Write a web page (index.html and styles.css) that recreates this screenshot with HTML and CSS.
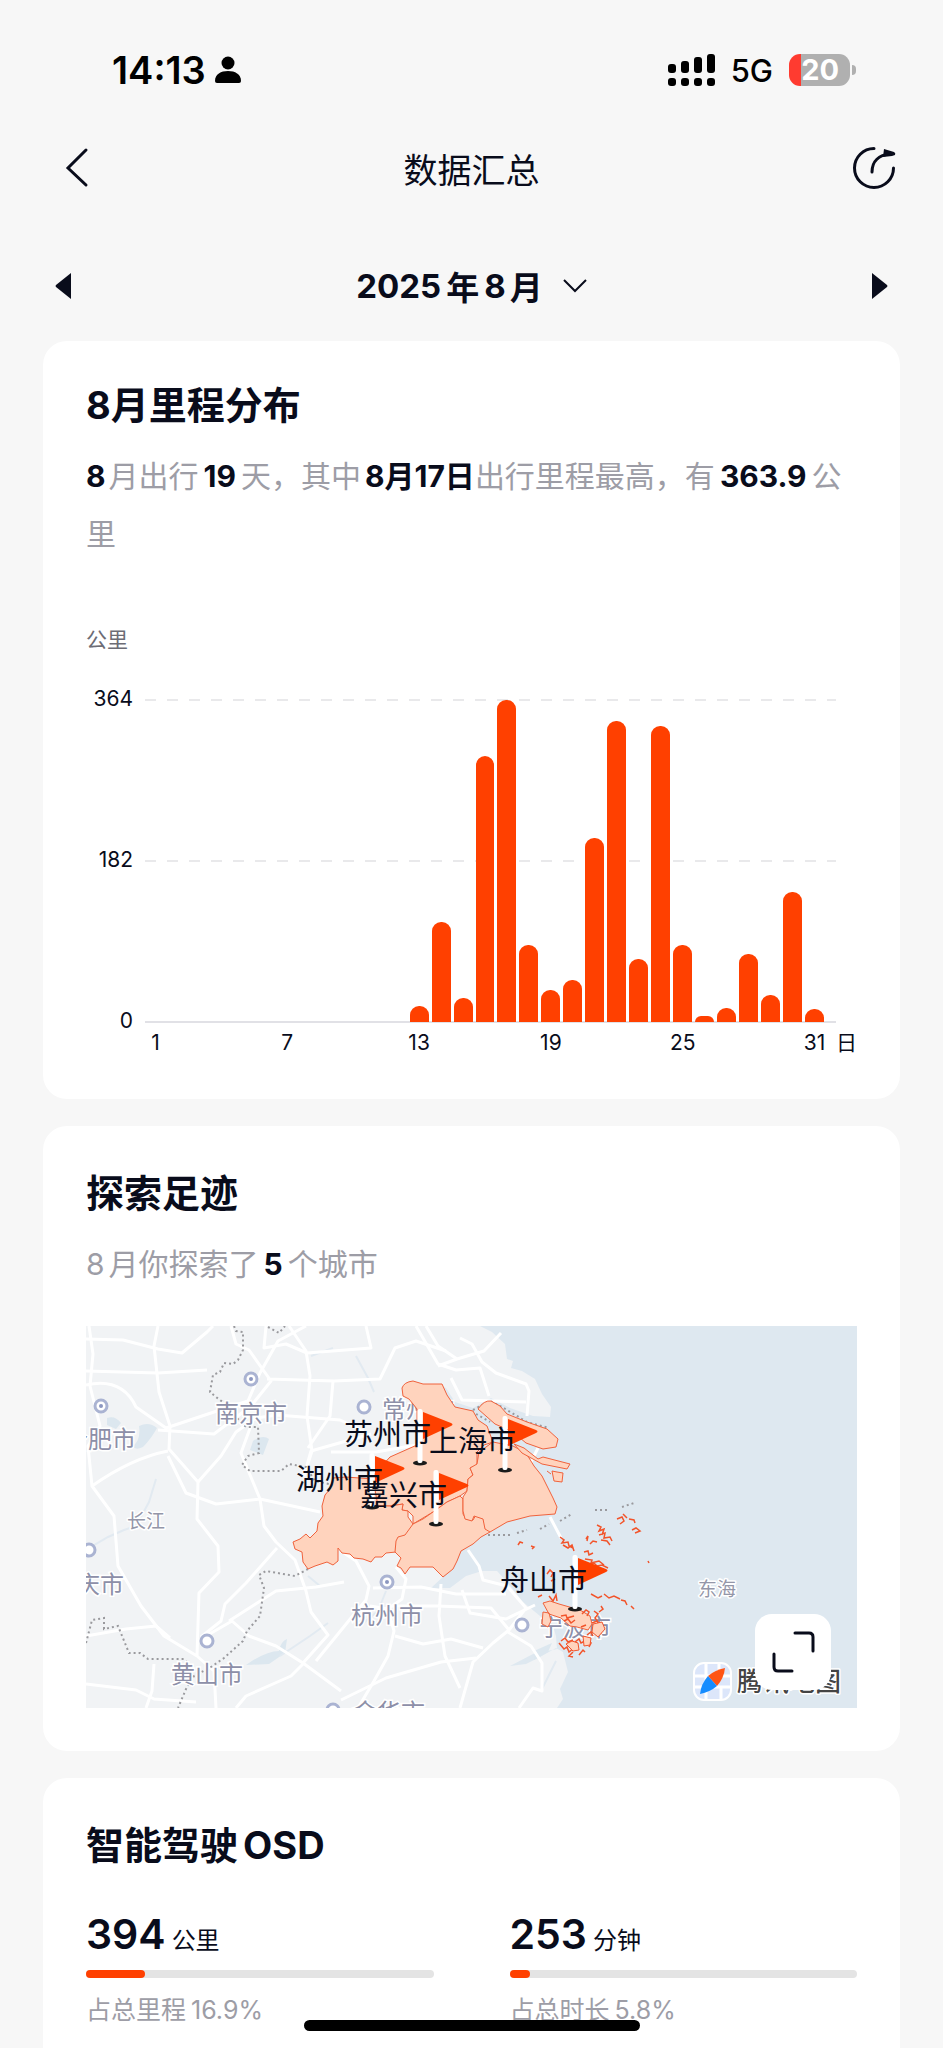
FILE: index.html
```html
<!DOCTYPE html>
<html lang="zh-CN">
<head>
  <meta charset="UTF-8">
  <meta name="viewport" content="width=device-width, initial-scale=1">
  <title>数据汇总</title>
  <link rel="stylesheet" href="styles.css">
</head>
<body>
  <!-- Phone status bar -->
  <div class="status-bar">
    <div class="status-left">
      <span class="time">14:13</span>
      <svg width="26" height="28" viewBox="0 0 26 28"><circle cx="13" cy="7" r="6.5"/><path d="M0 25C0 18 6 15 13 15s13 3 13 10q0 2-2 2H2q-2 0-2-2z"/></svg>
    </div>
    <div class="status-right">
      <svg width="47" height="32" viewBox="0 0 47 32">
        <rect x="0" y="10" width="8" height="9" rx="3"/><rect x="13" y="7" width="8" height="12" rx="3"/><rect x="26" y="3" width="8" height="16" rx="3"/><rect x="39" y="0" width="8" height="19" rx="3"/>
        <rect x="0" y="24" width="8" height="8" rx="3"/><rect x="13" y="24" width="8" height="8" rx="3"/><rect x="26" y="24" width="8" height="8" rx="3"/><rect x="39" y="24" width="8" height="8" rx="3"/>
      </svg>
      <span class="network">5G</span>
      <span class="battery"><span class="battery-level">20</span></span>
    </div>
  </div>

  <header class="nav-bar">
    <button class="icon-btn" aria-label="返回">
      <svg width="44" height="44" viewBox="0 0 44 44"><path d="M39 4 21 22l18 17" class="line"/></svg>
    </button>
    <h1>数据汇总</h1>
    <button class="icon-btn" aria-label="分享">
      <svg width="44" height="44" viewBox="0 0 44 44"><path d="M22 2.500A19.500 19.500 0 1 0 41.500 22M20 26C20 15 27 9 38 8" class="line"/><path d="M32 3 42 6q2 1 1 3l-3 1-9 1z" class="solid"/></svg>
    </button>
  </header>

  <div class="month-bar">
    <button class="icon-btn" aria-label="上个月"><svg width="16" height="26" viewBox="0 0 16 26"><path d="M16 0v26L1 14q-1-1 0-2z" class="solid"/></svg></button>
    <button class="month-btn">2025<span class="year">年</span>8<span class="month">月</span>
      <svg width="24" height="14" viewBox="0 0 24 14"><path d="M1 1l11 11L23 1" class="thin"/></svg>
    </button>
    <button class="icon-btn" aria-label="下个月"><svg width="16" height="26" viewBox="0 0 16 26"><path d="M0 0v26l15-12q1-1 0-2z" class="solid"/></svg></button>
  </div>

  <main>
    <!-- Daily mileage -->
    <section class="card mileage">
      <h2>8月里程分布</h2>
      <p class="summary"><strong class="first">8</strong>月出行<strong class="num">19</strong>天，其中<strong class="lead">8月17日</strong>出行里程最高，有<strong class="num">363.9</strong>公里</p>
      <div class="unit">公里</div>
      <div class="chart">
        <div class="y-axis"><span>364</span><span>182</span><span>0</span></div>
        <div class="plot">
          <svg class="grid-lines" width="100%" height="100%"><line x1="0" x2="100%" y1="0" y2="0"/><line x1="0" x2="100%" y1="50%" y2="50%"/><line x1="0" x2="100%" y1="100%" y2="100%" class="base"/></svg>
          <div class="bars">
            <i></i><i></i><i></i><i></i><i></i><i></i><i></i><i></i><i></i><i></i><i></i><i></i>
            <i style="height:5%"></i>
            <i style="height:31%"></i>
            <i style="height:7.5%"></i>
            <i style="height:82.5%"></i>
            <i style="height:100%"></i>
            <i style="height:24%"></i>
            <i style="height:10%"></i>
            <i style="height:13%"></i>
            <i style="height:57%"></i>
            <i style="height:93.5%"></i>
            <i style="height:19.5%"></i>
            <i style="height:92%"></i>
            <i style="height:24%"></i>
            <i style="height:2%"></i>
            <i style="height:4.5%"></i>
            <i style="height:21%"></i>
            <i style="height:8.5%"></i>
            <i style="height:40.5%"></i>
            <i style="height:4%"></i>
          </div>
        </div>
        <div class="x-axis"><span class="d1">1</span><span class="d7">7</span><span class="d13">13</span><span class="d19">19</span><span class="d25">25</span><span class="d31">31</span></div>
        <span class="x-unit">日</span>
      </div>
    </section>

    <!-- Visited cities -->
    <section class="card">
      <h2>探索足迹</h2>
      <p class="summary">8<span class="month">月</span>你探索了<strong class="num">5</strong>个城市</p>
      <div class="map">
        <svg class="map-canvas" viewBox="0 0 771 382">
          <defs>
            <g id="flag">
              <ellipse rx="7" ry="2.5" fill="#1b1b1b"/>
              <rect x="-2.5" y="-54" width="5" height="54" rx="2" fill="#fff"/>
              <path d="M3-51 31-40q3 1.500 0 3L3-24z" fill="#ff4000"/>
            </g>
            <g id="town"><circle r="6" fill="#fff" stroke="#aab3d2" stroke-width="3"/></g>
            <g id="capital"><use href="#town"/><circle r="2" fill="#8c97c0"/></g>
          </defs>
          <rect width="771" height="382" fill="#f1f3f5"/>
          <!-- sea -->
          <path fill="#dee8f0" d="M394 0 406 6 419 18 421 33 427 35 425 42 436 45 449 53 456 68 465 81 464 91 447 90 424 82 405 72 387 82 369 76 360 62 352 58 356 95 404 205 372 224 360 248 345 262 364 262 380 250 396 245 411 245 421 256 437 276 454 290 467 300 470 310 471 323 447 328 424 340 440 338 454 331 470 322 477 326 482 346 474 363 477 373 471 382H771V0z"/>
          <path class="lake" d="M21 92q8-3 14 5l-5 6-9-4zM53 100q10-5 18 2-6 11-14 19-8 4-10-1 8-6 6-20zM167 115q10-7 16-2l-6 16-13-5zM160 339q20-14 33-14 2-10 8-12l-2 14-16 11zM448 325l18-8-4 9-14 8z"/>
          <path class="river" d="M225 30l22-8M0 224 22 211 38 204 50 200 63 176 70 153M222 250l12 10M300 265l-8 20-18 15M455 365l15-30M194 330l30-20 18-13M270 30l12 22 6 14"/>
          <g class="roads">
            <path d="M0 13 37 14 72 23 96 27 121 6 127 0M0 45 72 47 121 44M72 0 68 20 73 66 84 100 83 123 98 140 112 156 111 193 132 220 133 246 113 267 111 330 128 345 130 382M3 0 7 28 4 60 14 100 2 120 6 160 28 190 32 240 55 280 78 310 111 330"/>
            <path d="M0 59q36-8 50 22l30 21 54-18 28-9 12-28 18-32 28-15M181 53 248 55 294 53 309 22 330 15 360 25M203 0 220 25 224 50 221 90 226 125 218 150M247 55 244 90 222 122M72 104 128 108 165 80 185 55 163 24 150 18 145 0"/>
            <path d="M6 160q40-28 76-35M112 156 135 130 150 106 170 92 191 89 254 94 278 105M82 130 100 167 130 178 174 173 211 181 234 186M174 173 178 200 190 216 209 234 220 265 225 286 242 309 217 337 255 365M174 173 155 127 167 94M191 222 160 257 139 278 135 295 115 311M120 310 146 295 163 310 190 320 217 337M143 295 190 265 230 261 258 256"/>
            <path d="M230 335 265 292 280 274 283 260 270 235 255 225M287 262 335 261 370 268 420 268M355 258 353 290 359 330 374 362M284 280 302 283 316 273 320 253 310 241M302 283 308 305 302 330 288 355 272 382M309 310 337 318 365 313 397 322M302 280 351 280 405 282 423 304"/>
            <path d="M0 358 50 364 68 373 110 376M0 310 40 303 70 300 84 312M68 338 66 365 60 382M218 337 205 350 160 370 150 382M255 374 300 352 355 336 390 332M180 0 178 22 200 18 221 27 285 22 280 0M330 0 352 38 370 44 394 42 403 70"/>
            <path d="M352 40 371 33 398 25 415 7M374 12 386 18 396 36 410 47 440 58 443 65 441 90M365 52 376 74 440 76M371 33 352 20 340 0M382 224 393 240 397 254 421 260 440 282 423 304 407 317 387 336 374 382M376 264 384 287 420 293 449 279M422 306 445 320 456 337 456 365 447 362 433 382M464 191 475 212M353 110 395 101M452 122 444 138M245 126 290 126 330 119M218 150 225 125 285 108"/>
          </g>
          <path class="border" d="M148 0 150 5 157 6 157 24 152 34 147 38 138 37 134 46 127 49 124 66 130 71 138 77 149 90 160 101 172 101 173 127 162 130 156 139 164 145 195 145 203 138 220 141 229 155 243 158M222 243 209 250 180 245 173 249 178 262 174 290 161 305 157 315 138 332 125 341 108 350 100 363 92 382M0 317 6 294 18 292 18 303 32 300 43 327 54 327 62 333 98 333 104 341M182 1 193 7 199 0M390 88 404 96M387 84 404 75 416 81 441 96 463 102M402 209H424M431 207l10-3M454 203 463 198M474 195 486 188M509 184h12M536 181 548 177"/>

          <g class="city">
            <text x="129" y="96">南京市</text><text x="-22" y="122">合肥市</text><text x="296" y="92">常州市</text>
            <text x="-34" y="267">安庆市</text><text x="85" y="357">黄山市</text><text x="265" y="298">杭州市</text>
            <text x="267" y="395">金华市</text><text x="453" y="310">宁波市</text>
            <text x="41" y="202" class="water">长江</text><text x="612" y="270" class="water">东海</text>
          </g>
          <use href="#capital" x="165" y="53"/><use href="#capital" x="15" y="80"/><use href="#capital" x="301" y="256"/>
          <use href="#town" x="278" y="81"/><use href="#town" x="3" y="224"/><use href="#town" x="121" y="315"/><use href="#town" x="247" y="384"/><use href="#town" x="436" y="299"/>

          <!-- visited areas -->
          <g class="visited">
            <path d="M316 62Q318 56 327 55L337 58 356 58 361 69 369 81 387 85 392 94 401 100 407 116 398 119 391 126 391 139 384 142 387 149 382 153 381 165 374 170 361 176 347 186 337 192 327 198 327 190 322 185 316 184 317 178 304 180 287 180 284 153 304 131 331 119V83L323 73 317 70z"/>
            <path d="M247 152 260 151 287 153 292 180 304 180 317 178 316 184 322 185 322 191 327 198 326 206 318 212 311 216 310 226 300 227 296 231 289 231 285 236 277 233 268 232 264 228 256 227 252 222 252 235 247 239 241 236 229 240 222 243 217 236 216 226 209 223 207 216 214 213 220 208 224 212 231 205 232 197 237 190 236 180 239 169 244 163z"/>
            <path d="M327 198 337 193 347 186 361 176 374 170 377 173 377 188 380 193 387 194 390 189 397 191 399 199 404 206 395 211 387 218 375 225 371 235 367 243 357 251 347 241 324 241 319 248 315 242 311 240 315 232 309 226 310 215 312 211 319 209z"/>
            <path d="M407 116 427 120 440 127 448 140 456 150 461 160 467 172 471 181 469 188 444 190 421 196 404 206 399 203 397 193 388 190 386 195 379 193 377 185 377 171 381 165 382 153 387 149 384 142 391 138 393 126z"/>
            <path d="M392 83Q398 74 405 75L414 80 421 88 441 96 461 103 472 113 470 121 457 123 440 117 427 106 409 98zM428 118 438 122 452 133 457 131 484 138 481 143 456 138 436 127zM461 145l4 3M466 145l5 1 6 1-1 9-8-1zM457 277l7-2 9 3 21 6 10 6 2 8-4 6-11-3-7-1-9-8-12-4zM457 286l6 1 2 8-3 6-6-3z"/>
          </g>
          <g class="islets">
            <path d="M474 211l4 3-2 3 6-1 1 4 4 2M477 219l5 3 4-3 2 6M432 219l2-3 3 1M445 220l3 1-2 2M500 213l2-3-1 5M511 199l4 2-2 4 5-2-2 6M513 209l6-2-1 5 6-1 2 4M515 214l6 1 3 4M531 193l5-2 2 4-4 3M537 188l4 4M543 193l5 1 1 3M546 204l4-2 4 3-5 2M504 218l3-3 4 1M498 226l4-1 1 4 4-2M499 233l7 1-1 3 8-2 5 4M501 239l7-2 3 3 5-1 6 3M512 244l5-1 3 2M505 268l7 4 4-2M518 268l5 4 5-2 6 3M535 274l4 1 2 4M545 280l3 3M562 235l1 2M461 248l3-4 3 3-2 4M465 255l4-2M452 271l4-2M463 270l4 5 3-6 1 6M475 290l5-1 1 3 7-2M478 295l4-2 3 4 4-3M496 288l4-4 3 2-2 4M508 285l4 3-3 4 3 4M506 297l5-2 2 4-6 3M509 304l5-2 1 5-5 2M501 309l4-3 2 4M501 316l4 1-2 4M489 316l4-3 2 4 4-2M475 315l4-3 3 4 5-2M473 317l5 6 3-2 2 5 5-4M487 326l-4 4 4 1M493 329l4-5 2 2M495 301l5-2M513 286l4-3-2-3"/>
            <path d="M480 318l7 7 6-1-1-7-6-2zM497 310l8 2-1 7-6 1zM507 298l9-2 3 7-7 8-6-5z" class="islet-fill"/>
          </g>
          <use href="#flag" x="334" y="137"/><use href="#flag" x="419" y="144"/><use href="#flag" x="286" y="181"/><use href="#flag" x="350" y="198"/><use href="#flag" x="489" y="283"/>
          <g class="pin-name">
            <text x="258" y="119">苏州市</text><text x="343" y="126">上海市</text><text x="210" y="164">湖州市</text><text x="274" y="180">嘉兴市</text><text x="414" y="265">舟山市</text>
          </g>

          <!-- map provider -->
          <rect x="608" y="337" width="37" height="37" rx="10" fill="#dce6fa" stroke="#fff" stroke-width="2"/>
          <path d="M620 338v35M609 350h35M633 338v8M609 361h35M635 360v13" stroke="#fff" stroke-width="3"/>
          <path d="M639 342Q638 352 631 360L622 350Q629 344 639 342z" fill="#ff5516"/><path d="M614 368Q615 358 622 350L631 360Q624 366 614 368z" fill="#168cff"/>
          <text x="651" y="365" class="provider">腾讯地图</text>
        </svg>
        <button class="expand-btn" aria-label="展开地图"><svg width="76" height="76" viewBox="0 0 76 76"><path d="M40 19H54Q58 19 58 23V37M19 40V53Q19 57 23 57H37" class="line"/></svg></button>
      </div>
    </section>

    <!-- Assisted driving -->
    <section class="card last">
      <h2>智能驾驶<span class="latin">OSD</span></h2>
      <div class="stats">
        <div>
          <div class="value">394<small>公里</small></div>
          <div class="track"><div class="fill" style="width:16.9%"></div></div>
          <div class="caption">占总里程<span class="latin">16.9%</span></div>
        </div>
        <div>
          <div class="value">253<small>分钟</small></div>
          <div class="track"><div class="fill" style="width:5.8%"></div></div>
          <div class="caption">占总时长<span class="latin">5.8%</span></div>
        </div>
      </div>
    </section>
  </main>
  <div class="home-indicator"></div>
</body>
</html>
```
FILE: styles.css
```css
:root {
  --page-bg: #f7f7f7;
  --card-bg: #ffffff;
  --text: #090c1b;
  --muted: #9d9da6;
  --accent: #ff4000;
  --track: #e4e4e4;
}

* {
  box-sizing: border-box;
}

body {
  margin: 0;
  min-height: 100vh;
  display: flex;
  flex-direction: column;
  background: var(--page-bg);
  color: var(--text);
  font-family: Inter, "Noto Sans CJK SC", sans-serif;
}

h1, h2, p {
  margin: 0;
}

button {
  padding: 0;
  border: none;
  background: none;
  color: inherit;
  font-family: inherit;
  cursor: pointer;
}

svg {
  display: block;
}

.line {
  fill: none;
  stroke: var(--text);
  stroke-width: 3;
  stroke-linecap: round;
}

.thin {
  fill: none;
  stroke: var(--text);
  stroke-width: 2;
}

.solid {
  fill: var(--text);
}

.num {
  margin: 0 5px;
}

.year {
  margin: 0 5px;
}

.month,
.lead {
  margin-left: 4px;
}

.first {
  margin-right: 3px;
}

.latin {
  margin-left: 5px;
}

/* Status bar */
.status-bar {
  height: 140px;
  padding: 0 87px 0 112px;
  display: flex;
  align-items: center;
  justify-content: space-between;
  color: #000;
}

.status-left {
  display: flex;
  align-items: center;
  gap: 9px;
}

.status-right {
  display: flex;
  align-items: center;
  gap: 16px;
}

.time {
  font-size: 38px;
  font-weight: 600;
}

.network {
  font-size: 31px;
  font-weight: 500;
}

.battery {
  display: flex;
  align-items: center;
  gap: 2px;
}

.battery::after {
  content: "";
  width: 4px;
  height: 10px;
  border-radius: 0 4px 4px 0;
  background: #b0b0b0;
}

.battery-level {
  width: 61px;
  height: 32px;
  padding-right: 11px;
  border-radius: 11px;
  background: linear-gradient(90deg, #ff3b30 20%, #b0b0b0 20%);
  color: #fff;
  font-size: 29px;
  font-weight: 700;
  line-height: 32px;
  text-align: right;
}

/* Page header */
.nav-bar {
  height: 56px;
  padding: 0 47px;
  display: flex;
  align-items: center;
  justify-content: space-between;
}

.nav-bar h1 {
  font-size: 34px;
  font-weight: 400;
}

.month-bar {
  height: 84px;
  margin: 48px 55px 13px;
  display: flex;
  align-items: center;
  justify-content: space-between;
}

.month-btn {
  display: flex;
  align-items: center;
  font-size: 33px;
  font-weight: 700;
}

.month-btn svg {
  margin-left: 20px;
}

/* Cards */
main {
  flex: 1;
  display: flex;
  flex-direction: column;
  gap: 27px;
  padding: 0 43px;
}

.card {
  padding: 46px 43px 43px;
  border-radius: 24px;
  background: var(--card-bg);
}

.card.mileage {
  padding-top: 43px;
  padding-bottom: 42px;
}

.card.last {
  flex: 1;
  padding-bottom: 16px;
  border-radius: 24px 24px 0 0;
}

.card h2 {
  font-size: 38px;
  font-weight: 700;
  line-height: 42px;
}

.summary {
  margin-top: 21px;
  color: var(--muted);
  font-size: 30px;
  line-height: 58px;
}

.summary strong {
  color: var(--text);
}

/* Chart */
.unit {
  margin: 63px 0 46px;
  color: #6c6c75;
  font-size: 21px;
  line-height: 28px;
}

.chart {
  display: grid;
  grid-template-columns: 47px 1fr 21px;
  column-gap: 12px;
  font-size: 21px;
  line-height: 28px;
}

.y-axis {
  height: 350px;
  margin: -15px 0;
  display: flex;
  flex-direction: column;
  justify-content: space-between;
  text-align: right;
}

.plot {
  height: 322px;
  display: grid;
  margin-right: -12px;
}

.grid-lines,
.bars {
  grid-area: 1 / 1;
}

.grid-lines {
  overflow: visible;
  stroke: #e9e9eb;
  stroke-width: 2;
  stroke-dasharray: 11 11;
}

.grid-lines .base {
  stroke: #e1e1e6;
  stroke-dasharray: none;
}

.bars,
.x-axis {
  display: grid;
  grid-template-columns: repeat(31, minmax(0, 1fr));
  column-gap: 3px;
  padding: 0 12px 0 1px;
}

.bars {
  height: 322px;
  align-items: end;
}

.bars i {
  border-radius: 9px 9px 0 0;
  background: var(--accent);
}

.x-axis {
  grid-column: 2;
  margin: 7px -12px 0 0;
}

.x-axis span {
  display: flex;
  justify-content: center;
}

.d1 { grid-column: 1; }
.d7 { grid-column: 7; }
.d13 { grid-column: 13; }
.d19 { grid-column: 19; }
.d25 { grid-column: 25; }
.d31 { grid-column: 31; }

.x-unit {
  margin-top: 7px;
}

/* Map */
.map {
  position: relative;
  margin-top: 33px;
}

.map-canvas {
  width: 100%;
  height: auto;
}

.lake {
  fill: #dce7ef;
}

.river {
  fill: none;
  stroke: #e2eaf1;
  stroke-width: 2;
}

.roads {
  fill: none;
  stroke: #fff;
  stroke-width: 3;
  stroke-linejoin: round;
}

.border {
  fill: none;
  stroke: #9a9a9e;
  stroke-width: 2;
  stroke-dasharray: 2 3;
}

.visited {
  fill: #ffd3bd;
  stroke: #f0623c;
  stroke-width: 1;
}

.islets {
  fill: none;
  stroke: #f2542b;
  stroke-width: 1.5;
}

.islet-fill {
  fill: #ffd3bd;
  stroke-width: 1;
}

.city text,
.provider {
  fill: #8d8fa8;
  stroke: #fff;
  stroke-width: 3;
  paint-order: stroke;
  font-size: 24px;
}

.city .water {
  fill: #9496a8;
  font-size: 19px;
}

.pin-name {
  fill: var(--text);
  font-size: 29px;
}

.city .water,
.provider {
  stroke-linejoin: round;
}

.provider {
  fill: #444;
  font-size: 26px;
  font-weight: 500;
}

.expand-btn {
  position: absolute;
  right: 26px;
  bottom: 18px;
  border-radius: 17px;
  background: #fff;
}

/* Driving stats */
.stats {
  margin-top: 44px;
  display: grid;
  grid-template-columns: 1fr 1fr;
  column-gap: 76px;
}

.value {
  height: 48px;
  font-size: 41px;
  font-weight: 600;
  line-height: 48px;
}

.value small {
  margin-left: 6px;
  font-size: 24px;
  font-weight: 400;
}

.track {
  height: 8px;
  margin: 12px 0 14px;
  border-radius: 4px;
  background: var(--track);
}

.fill {
  height: 100%;
  border-radius: 4px;
  background: var(--accent);
}

.caption {
  color: var(--muted);
  font-size: 25px;
  line-height: 36px;
}

.home-indicator {
  position: fixed;
  bottom: 17px;
  left: 50%;
  width: 336px;
  height: 11px;
  margin-left: -168px;
  border-radius: 6px;
  background: #000;
}
```
